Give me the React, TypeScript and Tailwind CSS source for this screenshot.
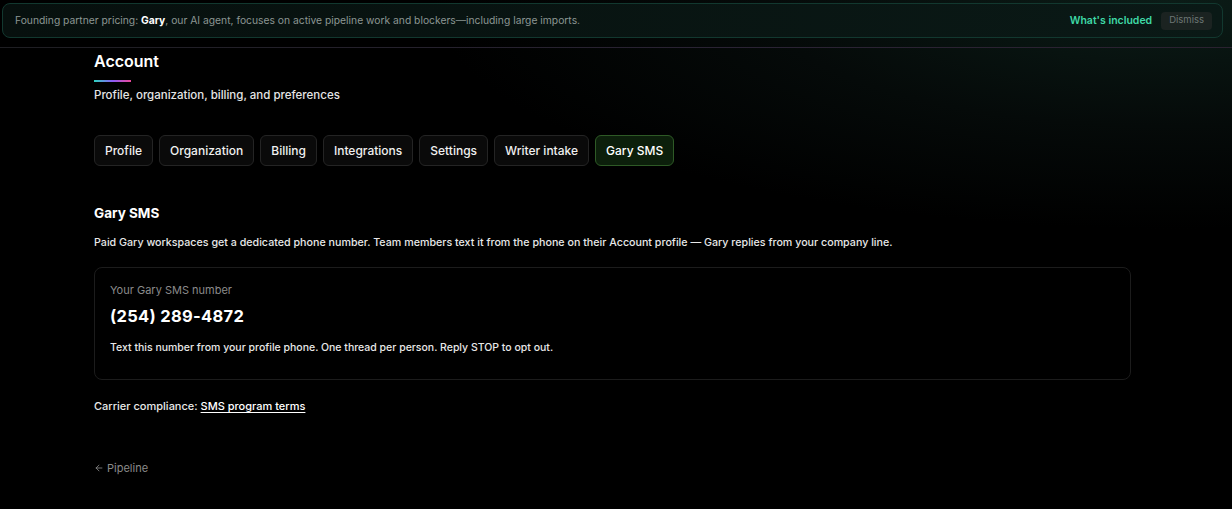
import { ArrowLeft } from "lucide-react";

const TABS = ["Profile", "Organization", "Billing", "Integrations", "Settings", "Writer intake", "Gary SMS"];

export default function App() {
  return (
    <div
      className="min-h-[509px] bg-black text-white bg-[radial-gradient(ellipse_60%_45%_at_95%_0%,#0b1c17_0%,#050a09_55%,#000_100%)]"
      style={{ fontFamily: "Inter, 'Noto Sans', sans-serif" }}
    >
      {/* Promo banner */}
      <div className="pl-[2px] pr-[9px] pt-[3px]">
        <div className="flex items-center justify-between h-[35px] pl-[12px] pr-[10px] rounded-lg border border-[#12382f] bg-[linear-gradient(90deg,#07100e,#0a1916)]">
          <p className="text-[10.3px] text-[#8c9693]">
            Founding partner pricing: <span className="font-bold text-white">Gary</span>, our AI agent, focuses on active
            pipeline work and blockers—including large imports.
          </p>
          <div className="flex items-center gap-[9px]">
            <button className="text-[10.5px] font-semibold text-[#3fd9a6]">What's included</button>
            <button className="h-[18px] px-[8px] rounded bg-[#1b2321] text-[9.5px] text-[#6d7774]">Dismiss</button>
          </div>
        </div>
      </div>

      <div className="mt-[9px] h-px bg-[linear-gradient(90deg,#1e1e22,#2a2334_60%,#2a2230)]" />

      <main className="pl-[94px] pr-[101px]">
        {/* Header */}
        <h1 className="mt-[1px] text-[16px] font-semibold leading-[24px]">Account</h1>
        <div className="mt-[7px] h-[2px] w-[37px] bg-[linear-gradient(90deg,#2dd4bf,#8b5cf6,#ec4899)]" />
        <p className="mt-[4px] text-[11.5px] font-medium leading-[18px] text-[#e5e5e5]">
          Profile, organization, billing, and preferences
        </p>

        {/* Tabs */}
        <nav className="mt-[31px] flex gap-[6px]">
          {TABS.map((t) => (
            <button
              key={t}
              className={
                t === "Gary SMS"
                  ? "h-[31px] px-[10px] rounded-md border border-[#2e5a26] bg-[#0c1f0b] text-[12px] font-medium text-white"
                  : "h-[31px] px-[10px] rounded-md border border-[#242424] bg-[#0a0a0a] text-[12px] font-medium text-[#f0f0f0]"
              }
            >
              {t}
            </button>
          ))}
        </nav>

        {/* Gary SMS section */}
        <h2 className="mt-[37px] text-[13.5px] font-bold leading-[20px]">Gary SMS</h2>
        <p className="mt-[12px] text-[10.7px] font-medium leading-[16px] text-[#e8e8e8]">
          Paid Gary workspaces get a dedicated phone number. Team members text it from the phone on their Account profile —
          Gary replies from your company line.
        </p>

        <div className="mt-[16px] h-[113px] rounded-lg border border-[#1c1c1c] px-[15px] pt-[14px]">
          <p className="text-[11px] leading-[16px] text-[#8a8a8a]">Your Gary SMS number</p>
          <p className="mt-[8px] text-[16.5px] font-bold leading-[20px] tracking-[0.3px]">(254) 289-4872</p>
          <p className="mt-[14px] text-[10.5px] font-medium leading-[16px] text-[#e8e8e8]">
            Text this number from your profile phone. One thread per person. Reply STOP to opt out.
          </p>
        </div>

        <p className="mt-[18px] text-[11px] font-medium leading-[16px] text-[#e8e8e8]">
          Carrier compliance:{" "}
          <a className="underline underline-offset-2 text-white" href="#">
            SMS program terms
          </a>
        </p>

        <a href="#" className="mt-[46px] flex items-center gap-[3px] text-[11px] leading-[16px] text-[#8a8a8a]">
          <ArrowLeft className="size-[10px]" strokeWidth={2} />
          Pipeline
        </a>
      </main>
    </div>
  );
}
